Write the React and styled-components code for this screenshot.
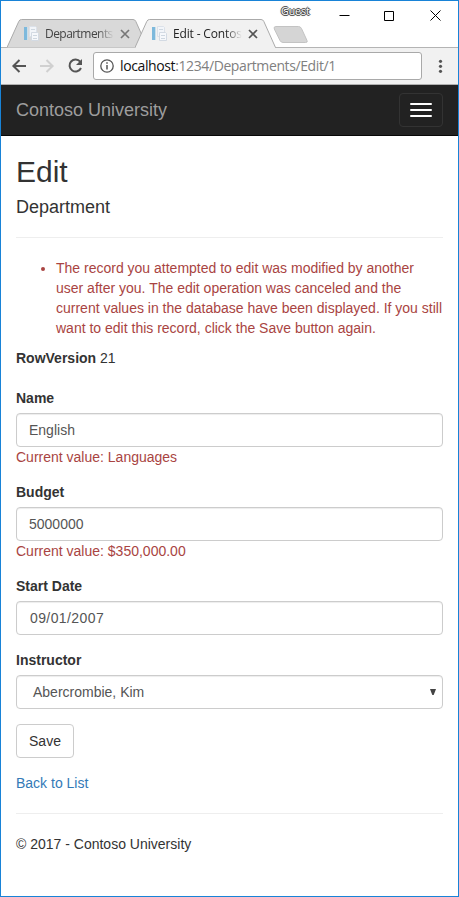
import React from 'react';
import styled, { createGlobalStyle } from 'styled-components';

const GlobalStyle = createGlobalStyle`
  * { box-sizing: border-box; }
  body {
    margin: 0;
    background: #fff;
    color: #333;
    font: 14px/20px "Liberation Sans", Arial, sans-serif;
  }
`;

const Window = styled.div`
  width: 459px;
  height: 897px;
  overflow: hidden;
  border: 1px solid #1883d7;
  background: #fff;
`;

const TitleBar = styled.header`
  display: flex;
  align-items: flex-start;
  height: 46px;
  font-family: "Open Sans", sans-serif;
`;

const TabStrip = styled.div`
  display: flex;
  align-items: flex-end;
  height: 47px;
  padding-left: 6px;
`;

const TabBox = styled.div`
  position: relative;
  z-index: ${(p) => (p.$active ? 2 : 1)};
  display: flex;
  align-items: center;
  width: 141px;
  height: 29px;
  margin-right: -13px;
  padding: 1px 0 0 16px;
`;

const TabShape = styled.svg`
  position: absolute;
  inset: 0;
  z-index: -1;
`;

const TabLabel = styled.span`
  width: 69px;
  margin-left: 6px;
  white-space: nowrap;
  font-size: 12px;
  line-height: 18px;
  letter-spacing: ${(p) => p.$spacing};
  color: ${(p) => (p.$active ? '#222' : '#444')};
  mask-image: linear-gradient(to right, #000 76%, transparent 100%);
`;

const TabClose = styled.svg`
  margin-left: 4px;
`;

const NewTab = styled.svg`
  margin: 0 0 3px 10px;
`;

const Guest = styled.span`
  margin: 3px 0 0 -28px;
  color: #fff;
  font-size: 10.5px;
  line-height: 14px;
  text-shadow: -1px 0 #444, 1px 0 #444, 0 -1px #444, 0 1px #444, 0 0 2px #666;
`;

const WindowButtons = styled.svg`
  flex: none;
  margin: 8px 16px 0 auto;
`;

const Toolbar = styled.div`
  display: flex;
  align-items: center;
  height: 38px;
  padding: 0 12px 0 10px;
  background: #f1f1f1;
  border-top: 1px solid #b4b4b4;
  border-bottom: 1px solid #b0b0b0;
`;

const NavIcons = styled.svg`
  flex: none;
  margin-right: 9px;
`;

const AddressBar = styled.div`
  display: flex;
  align-items: center;
  width: 329px;
  height: 28px;
  padding-left: 6px;
  border: 1px solid #a9a9a9;
  border-radius: 3px;
  background: #fff;
  color: #808080;
  font: 14px/20px "Open Sans", sans-serif;
  letter-spacing: -0.39px;
  white-space: nowrap;
`;

const Host = styled.span`
  margin-left: 6px;
  color: #111;
`;

const Dots = styled.svg`
  margin-left: auto;
`;

const Navbar = styled.nav`
  display: flex;
  align-items: center;
  justify-content: space-between;
  height: 51px;
  padding: 0 15px;
  background: #222;
  border-bottom: 1px solid #080808;
`;

const Brand = styled.a`
  color: #9d9d9d;
  font-size: 18px;
`;

const MenuButton = styled.button`
  display: flex;
  flex-direction: column;
  gap: 4px;
  width: 44px;
  height: 34px;
  padding: 9px 10px;
  border: 1px solid #333;
  border-radius: 4px;
  background: transparent;
`;

const MenuBar = styled.span`
  width: 22px;
  height: 2px;
  border-radius: 1px;
  background: #fff;
`;

const Content = styled.main`
  padding: 19px 15px 0;
`;

const Title = styled.h2`
  margin: 0 0 10px;
  font-size: 30px;
  font-weight: 400;
  line-height: 33px;
`;

const Subtitle = styled.h4`
  margin: 0;
  font-size: 18px;
  font-weight: 400;
  line-height: 19px;
`;

const Rule = styled.hr`
  margin: 20px 0;
  border: 0;
  border-top: 1px solid #eee;
`;

const Errors = styled.ul`
  margin: 0 0 10px;
  padding-left: 40px;
  color: #a94442;
`;

const Version = styled.div`
  margin-bottom: 20px;
`;

const Field = styled.div`
  margin-bottom: 15px;
`;

const Label = styled.label`
  display: block;
  margin-bottom: 5px;
  font-weight: 700;
`;

const Control = styled.div`
  display: flex;
  align-items: center;
  justify-content: space-between;
  height: 34px;
  padding: 0 6px 0 ${(p) => p.$indent || 12}px;
  border: 1px solid #ccc;
  border-radius: 4px;
  box-shadow: inset 0 1px 1px rgba(0, 0, 0, 0.075);
  color: #555;
  letter-spacing: ${(p) => p.$spacing || 'normal'};
`;

const CurrentValue = styled.div`
  color: #a94442;
`;

const SaveButton = styled.button`
  display: block;
  width: 58px;
  height: 34px;
  margin-bottom: 15px;
  padding: 0;
  border: 1px solid #ccc;
  border-radius: 4px;
  background: #fff;
  color: #333;
  font: inherit;
`;

const BackLink = styled.a`
  display: block;
  color: #337ab7;
`;

function Favicon() {
  return (
    <svg width="16" height="16" viewBox="0 0 16 16">
      <path d="M1 1h3v13H1z" fill="#7db9dc" />
      <path d="M4 1h1v13H4z" fill="#c9dfec" />
      <path d="M6.5 .5h6l1 1v9h-7z" fill="#f2f5f9" stroke="#dbe1e9" />
      <path d="M8.5 6.5h6l1 1v7h-7z" fill="#f6f8fb" stroke="#d3dae3" />
      <path d="M8 3.5h4M10 9.5h4M10 12.5h4" stroke="#ced7e0" />
    </svg>
  );
}

function Tab({ active, spacing, children }) {
  return (
    <TabBox $active={active}>
      <TabShape width="141" height="29" viewBox="0 0 141 29">
        <path
          d="M0 28.5L11.8 2.4Q12.6 .5 14.5 .5H126Q128 .5 128.8 2.4L140.5 28.5Z"
          fill={active ? '#f1f1f1' : '#d9d9d9'}
        />
        <path
          d="M0 28.5L11.8 2.4Q12.6 .5 14.5 .5H126Q128 .5 128.8 2.4L140.5 28.5"
          fill="none"
          stroke="#aaa"
        />
        {active && <path d="M1 28.5H140" stroke="#f1f1f1" />}
      </TabShape>
      <Favicon />
      <TabLabel $active={active} $spacing={spacing}>{children}</TabLabel>
      <TabClose width="14" height="14" viewBox="0 0 14 14">
        <path d="M3 3l8 8M11 3l-8 8" stroke={active ? '#555' : '#777'} strokeWidth="1.7" />
      </TabClose>
    </TabBox>
  );
}

function FormField({ label, indent, spacing, current, select, children }) {
  return (
    <Field>
      <Label>{label}</Label>
      <Control $indent={indent} $spacing={spacing}>
        {children}
        {select && (
          <svg width="6" height="6" viewBox="0 0 6 6">
            <path d="M0 0h6L3.7 6H2.3z" fill="#444" />
          </svg>
        )}
      </Control>
      {current && <CurrentValue>Current value: {current}</CurrentValue>}
    </Field>
  );
}

export default function App() {
  return (
    <>
      <GlobalStyle />
      <Window>
        <TitleBar>
          <TabStrip>
            <Tab spacing="-0.55px">Departments</Tab>
            <Tab active spacing="-0.15px">Edit - Contos</Tab>
            <NewTab width="36" height="19" viewBox="0 0 36 19">
              <path
                d="M3 1.5H25.5Q27.5 1.5 28.5 3.5L34 15.5Q35 17.5 32.5 17.5H10Q8 17.5 7 15.5L1.3 4Q.3 1.5 3 1.5Z"
                transform="translate(0 -1)"
                fill="#d5d5d5"
                stroke="#c3c3c3"
              />
            </NewTab>
          </TabStrip>
          <Guest>Guest</Guest>
          <WindowButtons width="104" height="14" viewBox="0 0 104 14">
            <path d="M1.5 6.5h10" stroke="#000" />
            <path d="M46.5 2.5h9v9h-9z" fill="none" stroke="#000" />
            <path d="M92.5 1.5l10 10M102.5 1.5l-10 10" stroke="#000" />
          </WindowButtons>
        </TitleBar>
        <Toolbar>
          <NavIcons width="73" height="18" viewBox="0 0 73 18" fill="none" strokeWidth="2">
            <path d="M15 9H3M8.5 3L2.4 9l6.1 6" stroke="#555" />
            <path d="M29 9h12M35.5 3l6.1 6-6.1 6" stroke="#d0d0d0" />
            <path d="M69.2 4.7A6 6 0 1 0 70 11" stroke="#555" />
            <path d="M71 2v6h-6z" fill="#555" />
          </NavIcons>
          <AddressBar>
            <svg width="14" height="14" viewBox="0 0 14 14">
              <circle cx="7" cy="7" r="6.2" fill="none" stroke="#555" strokeWidth="1.3" />
              <path d="M7 6v4.5M7 3.3v1.5" stroke="#555" strokeWidth="1.5" />
            </svg>
            <Host>localhost</Host>:1234/Departments/Edit/1
          </AddressBar>
          <Dots width="10" height="16" viewBox="0 0 10 16" fill="#555">
            <circle cx="4.5" cy="3.3" r="1.6" />
            <circle cx="4.5" cy="8.3" r="1.6" />
            <circle cx="4.5" cy="13.3" r="1.6" />
          </Dots>
        </Toolbar>
        <Navbar>
          <Brand>Contoso University</Brand>
          <MenuButton aria-label="Toggle navigation">
            <MenuBar />
            <MenuBar />
            <MenuBar />
          </MenuButton>
        </Navbar>
        <Content>
          <Title>Edit</Title>
          <Subtitle>Department</Subtitle>
          <Rule />
          <Errors>
            <li>
              The record you attempted to edit was modified by another user after you. The edit
              operation was canceled and the current values in the database have been displayed. If
              you still want to edit this record, click the Save button again.
            </li>
          </Errors>
          <Version>
            <b>RowVersion</b> 21
          </Version>
          <FormField label="Name" current="Languages">English</FormField>
          <FormField label="Budget" current="$350,000.00">5000000</FormField>
          <FormField label="Start Date" indent={13} spacing="0.4px">
            09/01/2007
          </FormField>
          <FormField label="Instructor" indent={16} select>Abercrombie, Kim</FormField>
          <SaveButton>Save</SaveButton>
          <BackLink>Back to List</BackLink>
          <Rule />
          <footer>© 2017 - Contoso University</footer>
        </Content>
      </Window>
    </>
  );
}
